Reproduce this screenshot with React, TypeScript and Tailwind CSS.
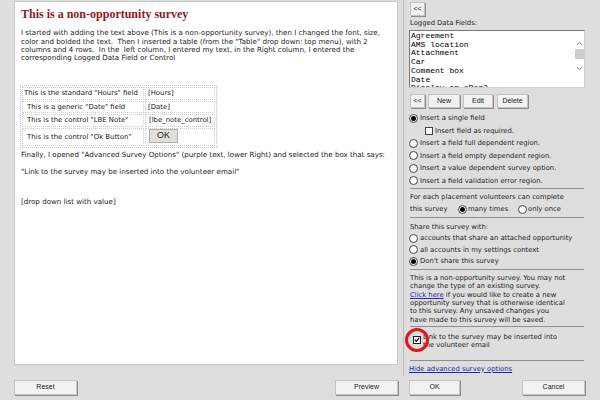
import { ChevronUp, ChevronDown } from "lucide-react";

const fields = [
  "Agreement",
  "AMS location",
  "Attachment",
  "Car",
  "Comment box",
  "Date",
  "Display on eRec?",
];

function Btn({ label, className }: { label: string; className: string }) {
  return (
    <button
      className={
        "flex items-center justify-center bg-[#f2f2f2] border border-[#c4c4c4] shadow-[1px_1px_0_#8c8c8c] text-[7px] text-[#222] font-['Liberation_Sans',sans-serif] " +
        className
      }
    >
      {label}
    </button>
  );
}

function Radio({ on }: { on?: boolean }) {
  return (
    <span className="w-[9px] h-[9px] rounded-full border border-[#444] bg-white flex items-center justify-center shrink-0">
      {on && <span className="w-[5px] h-[5px] rounded-full bg-black" />}
    </span>
  );
}

function Option({ on, text }: { on?: boolean; text: string }) {
  return (
    <div className="h-[12.5px] flex items-center gap-[2px] -ml-[1px]">
      <Radio on={on} />
      <span className="whitespace-nowrap">{text}</span>
    </div>
  );
}

function Rule() {
  return <div className="w-[174px] h-px bg-[#8e8e8e]" />;
}

export default function App() {
  return (
    <div className="w-[600px] h-[400px] bg-[#dedede] flex overflow-hidden text-[6.8px] text-[#222] font-['DejaVu_Sans',Verdana,sans-serif]">
      {/* editor side */}
      <div className="ml-[14px] w-[384px] flex flex-col">
        <div className="mt-px h-[364px] bg-white border border-[#c8c8c8] pl-[6px] pt-[6px] text-[7.1px]">
          <h1 className="h-[13px] leading-[13px] text-[12px] font-bold text-[#8b1c1c] font-['Liberation_Serif',serif] whitespace-nowrap">
            This is a non-opportunity survey
          </h1>
          <div className="mt-[8.2px] leading-[8.33px] whitespace-pre">
            <div>I started with adding the text above (This is a non-opportunity survey), then I changed the font, size,</div>
            <div>color and bolded the text.  Then I inserted a table (from the "Table" drop down: top menu), with 2</div>
            <div>columns and 4 rows.  In the  left column, I entered my text, in the Right column, I entered the</div>
            <div>corresponding Logged Data Field or Control</div>
          </div>
          <table className="mt-[22.5px] -ml-px w-[197px] text-[6.9px] border border-dotted border-[#c4c4c4] border-separate border-spacing-[1px]">
            <tbody>
              <tr className="h-[13px]">
                <td className="w-[122px] border border-dotted border-[#cfcfcf] pl-px whitespace-nowrap">This is the standard "Hours" field</td>
                <td className="border border-dotted border-[#cfcfcf] pl-[2px]">[Hours]</td>
              </tr>
              <tr className="h-[12px]">
                <td className="border border-dotted border-[#cfcfcf] pl-[4px] whitespace-nowrap">This is a generic "Date" field</td>
                <td className="border border-dotted border-[#cfcfcf] pl-[2px]">[Date]</td>
              </tr>
              <tr className="h-[12px]">
                <td className="border border-dotted border-[#cfcfcf] pl-[4px] whitespace-nowrap">This is the control "LBE Note"</td>
                <td className="border border-dotted border-[#cfcfcf] pl-[3px] whitespace-nowrap">[lbe_note_control]</td>
              </tr>
              <tr className="h-[18px]">
                <td className="border border-dotted border-[#cfcfcf] pl-[4px] whitespace-nowrap">This is the control "Ok Button"</td>
                <td className="border border-dotted border-[#cfcfcf] pl-[3px] align-top">
                  <span className="inline-flex w-[29px] h-[14px] items-center justify-center bg-[#e2dfdb] border border-[#b0aca6] text-[9px] font-['Liberation_Sans',sans-serif]">
                    OK
                  </span>
                </td>
              </tr>
            </tbody>
          </table>
          <div className="mt-[3px] leading-[8.33px] whitespace-nowrap">
            Finally, I opened "Advanced Survey Options" (purple text, lower Right) and selected the box that says:
          </div>
          <div className="mt-[8.8px] leading-[8.33px] whitespace-nowrap">
            "Link to the survey may be inserted into the volunteer email"
          </div>
          <div className="mt-[21.5px] leading-[8.33px] whitespace-nowrap">[drop down list with value]</div>
        </div>
        <div className="mt-[15px] flex justify-between">
          <Btn label="Reset" className="w-[63px] h-[15px]" />
          <Btn label="Preview" className="w-[63px] h-[15px]" />
        </div>
      </div>

      {/* options side */}
      <div className="w-[202px] flex flex-col">
        <div className="ml-[5px] h-[376px] border-l border-[#bdbdbd] pl-[6px] flex flex-col">
          <Btn label="<<" className="mt-[2px] w-[15px] h-[14px] text-[6px]" />
          <div className="mt-[2px] h-[10px] leading-[10px]">Logged Data Fields:</div>
          <div className="mt-[2px] -ml-px w-[176px] h-[58px] bg-white border border-[#7a7a7a] border-b-[#d0d0d0] border-r-[#d0d0d0] flex">
            <div className="flex-1 h-[56px] pl-px pt-px text-[8px] leading-[8.7px] text-black font-['Liberation_Mono',monospace] overflow-hidden">
              {fields.map((f) => (
                <div key={f} className="whitespace-nowrap">
                  {f}
                </div>
              ))}
            </div>
            <div className="w-[10px] flex flex-col items-center pt-[8px] text-[#555]">
              <ChevronUp size={9} strokeWidth={2} />
              <div className="mt-[1px] w-[9px] h-[10px] bg-[#cdcdcd]" />
              <div className="h-[5px]" />
              <ChevronDown size={9} strokeWidth={2} />
            </div>
          </div>
          <div className="mt-[6px] h-[14px] flex">
            <Btn label="<<" className="w-[15px] h-[14px] text-[6px]" />
            <Btn label="New" className="ml-[3px] w-[32px] h-[14px]" />
            <Btn label="Edit" className="ml-[3px] w-[30px] h-[14px]" />
            <Btn label="Delete" className="ml-[4px] w-[31px] h-[14px]" />
          </div>
          <div className="mt-[4px]">
            <Option on text="Insert a single field" />
            <div className="h-[12.5px] flex items-center gap-[2px] pl-[15px]">
              <span className="w-[8px] h-[8px] border border-[#444] bg-white" />
              <span className="whitespace-nowrap">Insert field as required.</span>
            </div>
            <Option text="Insert a field full dependent region." />
            <Option text="Insert a field empty dependent region." />
            <Option text="Insert a value dependent survey option." />
            <Option text="Insert a field validation error region." />
          </div>
          <div className="mt-[1px]">
            <Rule />
          </div>
          <div className="mt-[1.5px]">
            <div className="h-[12.5px] flex items-center whitespace-nowrap">For each placement volunteers can complete</div>
            <div className="h-[12.5px] flex items-center whitespace-nowrap">
              <span className="w-[48px] shrink-0">this survey</span>
              <Radio on />
              <span className="ml-[1px] w-[50px] shrink-0">many times</span>
              <Radio />
              <span className="ml-[1px]">only once</span>
            </div>
          </div>
          <div className="mt-[1.5px]">
            <Rule />
          </div>
          <div className="mt-[3px]">
            <div className="h-[11.5px] flex items-center whitespace-nowrap">Share this survey with:</div>
            <div className="[&>div]:h-[11.5px]">
              <Option text="accounts that share an attached opportunity" />
              <Option text="all accounts in my settings context" />
              <Option on text="Don't share this survey" />
            </div>
          </div>
          <div className="mt-[2px]">
            <Rule />
          </div>
          <div className="mt-[3.8px] leading-[8.4px] whitespace-nowrap">
            <div>This is a non-opportunity survey. You may not</div>
            <div>change the type of an existing survey.</div>
            <div>
              <a className="text-[#2323b4] underline">Click here</a> if you would like to create a new
            </div>
            <div>opportunity survey that is otherwise identical</div>
            <div>to this survey. Any unsaved changes you</div>
            <div>have made to this survey will be saved.</div>
          </div>
          <div className="mt-[1.8px]">
            <Rule />
          </div>
          <div className="relative mt-[5.8px] flex leading-[8.4px]">
            <span className="mt-[3px] ml-[3px] w-[8px] h-[8px] border border-[#222] bg-white flex items-center justify-center shrink-0">
              <svg width="7" height="7" viewBox="0 0 8 8">
                <path d="M1 4.2 L3.2 6.4 L7 1.4" fill="none" stroke="#000" strokeWidth="1.6" />
              </svg>
            </span>
            <div className="ml-[2px] whitespace-nowrap">
              <div>Link to the survey may be inserted into</div>
              <div>the volunteer email</div>
            </div>
            <span className="absolute left-[-5px] top-[-4.5px] w-[24px] h-[24px] rounded-full border-[3px] border-[#e3151b]" />
          </div>
          <div className="mt-[10px]">
            <Rule />
          </div>
          <div className="mt-[3px] h-[10px] leading-[10px]">
            <a className="-ml-px text-[#2323b4] underline whitespace-nowrap">Hide advanced survey options</a>
          </div>
        </div>
        <div className="mt-[4px] ml-[11px] flex">
          <Btn label="OK" className="w-[51px] h-[15px]" />
          <Btn label="Cancel" className="ml-[62px] w-[63px] h-[15px]" />
        </div>
      </div>
    </div>
  );
}
